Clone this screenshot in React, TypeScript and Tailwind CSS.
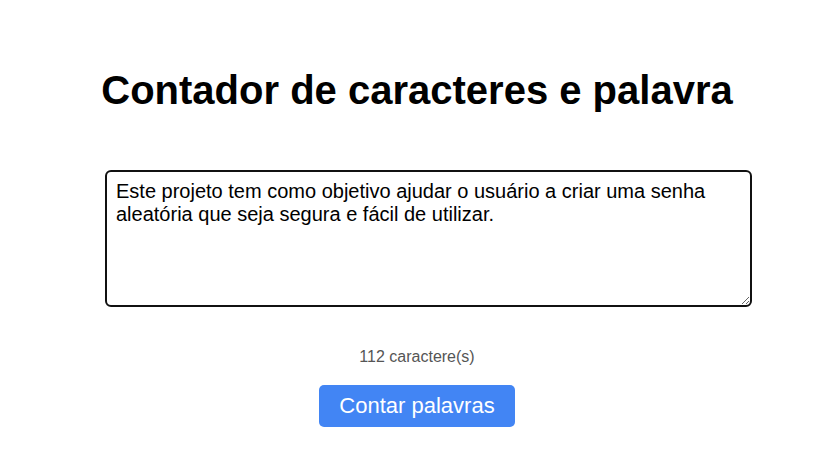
import { useState } from 'react';

export default function App() {
  const [text, setText] = useState(
    'Este projeto tem como objetivo ajudar o usuário a criar uma senha aleatória que seja segura e fácil de utilizar.'
  );

  return (
    <div className="min-h-[465px] bg-white pl-[4px] font-['Liberation_Sans',Arial,sans-serif]">
      <div className="flex flex-col items-center pt-[62px]">
        {/* Title */}
        <h1 className="text-[40px] leading-[56px] font-bold text-black">
          Contador de caracteres e palavra
        </h1>

        {/* Text input */}
        <textarea
          value={text}
          onChange={(e) => setText(e.target.value)}
          className="mt-[52px] ml-[23px] w-[647px] h-[137px] rounded-[6px] border-2 border-[#111] px-[9px] py-[8px] text-[20px] leading-[23px] text-black outline-none resize"
        />

        <p className="mt-[41px] text-[16px] leading-[18px] text-[#555]">
          {text.length} caractere(s)
        </p>

        <button className="mt-[19px] h-[42px] w-[196px] rounded-[5px] bg-[#4285f4] text-[22px] leading-[42px] text-white">
          Contar palavras
        </button>
      </div>
    </div>
  );
}
